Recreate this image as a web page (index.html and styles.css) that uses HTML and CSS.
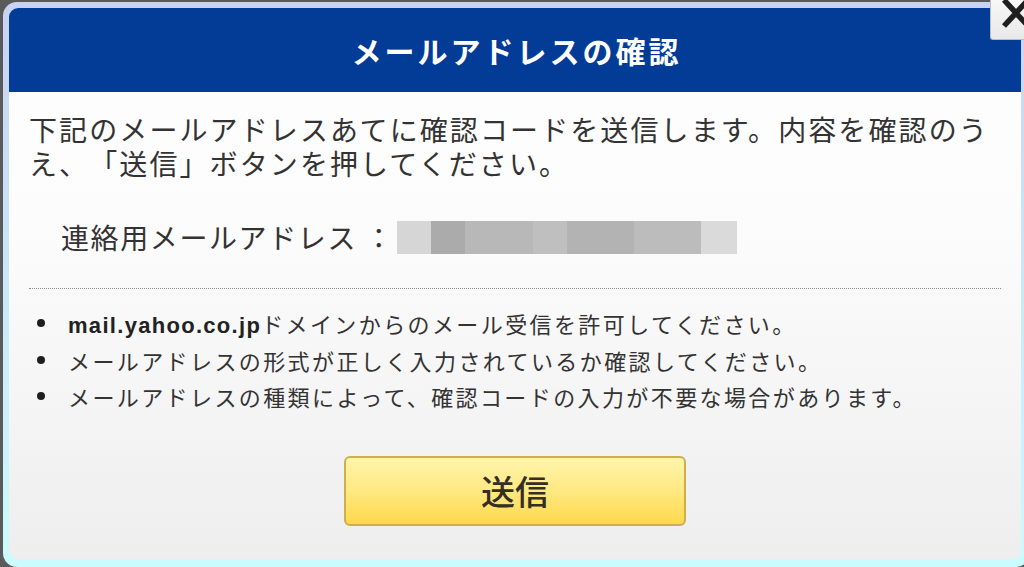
FILE: index.html
```html
<!DOCTYPE html>
<html lang="ja">

<head>
    <meta charset="UTF-8">
    <meta name="viewport" content="width=device-width, initial-scale=1.0">
    <title>メールアドレスの確認</title>
    <link rel="stylesheet" href="styles.css">
</head>

<body>

    <div class="dialog">
        <div class="panel">
            <div class="header">
                <h1 class="title">メールアドレスの確認</h1>
            </div>
            <div class="content">
                <p class="lead">
                    <span class="lead-line">下記のメールアドレスあてに確認コードを送信します。内容を確認のう</span>
                    <span class="lead-line">え、「送信」ボタンを押してください。</span>
                </p>
                <div class="address">
                    <span class="address-label">連絡用メールアドレス ：</span>
                    <span class="address-blur"></span>
                </div>
                <ul class="notes">
                    <li><span><b class="domain">mail.yahoo.co.jp</b>ドメインからのメール受信を許可してください。</span></li>
                    <li><span>メールアドレスの形式が正しく入力されているか確認してください。</span></li>
                    <li><span>メールアドレスの種類によって、確認コードの入力が不要な場合があります。</span></li>
                </ul>
                <button class="send" type="button">送信</button>
            </div>
        </div>
    </div>

    <!-- 閉じるボタン -->
    <div class="close">
        <svg width="30" height="30" viewBox="0 0 30 30">
            <path d="M3 0 L27 26 M27 0 L3 26" stroke="#1f1f1f" stroke-width="5.5" fill="none" />
        </svg>
    </div>

</body>

</html>
```

FILE: styles.css
```css
* {
    margin: 0;
    padding: 0;
    box-sizing: border-box;
}

ul,
li {
    list-style-type: none;
}

body {
    background-color: #5a5a5a;
    overflow: hidden;
    height: 567px;
    font-family: "Noto Sans CJK JP", "Noto Sans", sans-serif;
    color: #333;
    text-spacing-trim: space-all;
}

.dialog {
    margin: 2px 0 0 3px;
    width: 1027px;
    padding: 6px 9px 8px 6px;
    border-radius: 14px;
    background: linear-gradient(#c8d3f4 0%, #c9e8f9 50%, #cbfcfd 100%);
}

.panel {
    height: 551px;
    border-radius: 9px;
    overflow: hidden;
    display: flex;
    flex-direction: column;
    background: linear-gradient(#ffffff 0%, #fbfbfb 45%, #eeeeee 100%);
}

.header {
    height: 84px;
    background-color: #023c97;
    display: flex;
    align-items: center;
    justify-content: center;
}

.title {
    color: #fff;
    font-size: 30px;
    font-weight: 700;
    letter-spacing: 3px;
    padding-left: 3px;
    line-height: 1;
}

.content {
    padding: 20px 20px 0;
    display: flex;
    flex-direction: column;
}

.lead {
    font-size: 28px;
    letter-spacing: 2.1px;
    white-space: nowrap;
}

.lead-line {
    display: block;
    height: 34px;
    line-height: 34px;
}

.address {
    margin-top: 40px;
    padding-left: 32px;
    display: flex;
    align-items: center;
    height: 34px;
}

.address-label {
    font-size: 28px;
    letter-spacing: 1.6px;
    line-height: 34px;
}

.address-blur {
    margin-left: 3px;
    width: 340px;
    height: 33px;
    background: linear-gradient(90deg,
            #d6d6d6 0, #d6d6d6 34px,
            #ababab 34px, #ababab 68px,
            #b8b8b8 68px, #b8b8b8 136px,
            #bfbfbf 136px, #bfbfbf 170px,
            #b3b3b3 170px, #b3b3b3 237px,
            #bcbcbc 237px, #bcbcbc 304px,
            #dadada 304px, #dadada 340px);
}

.notes {
    margin-top: 34px;
    border-top: 1px dotted #8a8a8a;
    padding-top: 16px;
}

.notes li {
    display: flex;
    align-items: center;
    padding-left: 8px;
    height: 36.5px;
    font-size: 22px;
    letter-spacing: 2.4px;
    white-space: nowrap;
}

.notes li::before {
    content: "";
    width: 8px;
    height: 8px;
    border-radius: 50%;
    background-color: #1e1e1e;
    margin-right: 23px;
    flex-shrink: 0;
}

.domain {
    font-family: "Liberation Sans", Arial, sans-serif;
    font-weight: 700;
    letter-spacing: 1.3px;
    color: #222;
}

.send {
    margin: 41px auto 0;
    width: 342px;
    height: 70px;
    border: 2px solid #cfae4c;
    border-radius: 6px;
    background: linear-gradient(#fff4ab 0%, #ffea86 45%, #ffd84c 100%);
    font-family: "Noto Sans CJK JP", sans-serif;
    font-size: 34px;
    font-weight: 500;
    color: #332f22;
    cursor: pointer;
}

.close {
    position: absolute;
    top: 0;
    left: 990px;
    width: 44px;
    height: 40px;
    background: linear-gradient(#f7f7f7, #e9e9e9);
    border-left: 1px solid #bdbdbd;
    border-bottom: 1px solid #bdbdbd;
    border-bottom-left-radius: 3px;
    padding: 0 0 0 10px;
}

.close svg {
    display: block;
}
```
